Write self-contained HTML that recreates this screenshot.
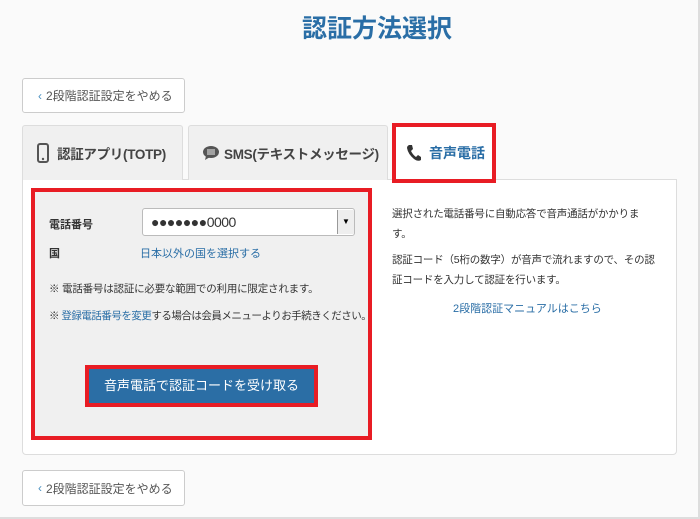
<!DOCTYPE html>
<html><head><meta charset="utf-8"><style>
*{box-sizing:border-box;margin:0;padding:0}
body{width:700px;height:519px;background:#fafafa;font-family:"Liberation Sans","Noto Sans CJK JP",sans-serif;position:relative;overflow:hidden;border-right:2px solid #ddd;border-bottom:2px solid #ddd}
.abs{position:absolute;white-space:nowrap}
h1{position:absolute;left:0;width:754px;top:9px;text-align:center;font-size:25px;color:#2a6ea6;font-weight:bold}
.back{position:absolute;left:22px;width:163px;height:35px;border:1px solid #ccc;border-radius:3px;background:#fff;font-size:12px;color:#555;display:flex;align-items:center;padding-left:15px;white-space:nowrap}
.back b{color:#4a90c0;font-weight:normal;margin-right:4px}
.tab{position:absolute;top:125px;height:55px;background:#f0f0f0;border:1px solid #ddd;border-bottom:none;border-radius:3px 3px 0 0;font-size:13.5px;font-weight:bold;color:#444;display:flex;align-items:center;white-space:nowrap;letter-spacing:-0.3px}
.panel{position:absolute;left:22px;top:179px;width:655px;height:276px;background:#fff;border:1px solid #ddd;border-radius:0 0 4px 4px}
.red{position:absolute;border:4px solid #e81c24}
.lnk{color:#2a6ea6}
.sm{font-size:10.5px;color:#333;letter-spacing:-0.2px}
</style></head><body>
<h1>認証方法選択</h1>
<div class="back" style="top:78px"><b>‹</b>2段階認証設定をやめる</div>
<div class="panel"></div>
<div class="tab" style="left:22px;width:161px;padding-left:14px">
<svg width="12" height="20" viewBox="0 0 12 20" style="margin-right:8px"><rect x="1" y="1" width="10" height="18" rx="2" fill="none" stroke="#555" stroke-width="2"/><circle cx="6" cy="16" r="1.2" fill="#555"/></svg>認証アプリ(TOTP)</div>
<div class="tab" style="left:188px;width:200px;padding-left:13px">
<svg width="18" height="16" viewBox="0 0 18 16" style="margin-right:4px"><ellipse cx="9" cy="7" rx="8" ry="6" fill="#555"/><path d="M4 11 L3 15 L8 12Z" fill="#555"/><path d="M5 5h8M5 7h8M5 9h8" stroke="#eee" stroke-width="1"/></svg>SMS(テキストメッセージ)</div>
<div class="abs" style="left:395px;top:126px;width:98px;height:54px;background:#fff"></div>
<div class="red" style="left:392px;top:123px;width:104px;height:60px"></div>
<div class="abs" style="left:406px;top:143px;font-size:14px;font-weight:bold;color:#2a6ea6;display:flex;align-items:center">
<svg width="16" height="18" viewBox="0 0 16 18" style="margin-right:7px"><path d="M3 1 L6 1 L7 5 L5 7 Q7 11 10 13 L12 11 L15 13 L15 16 Q12 18 8 15 Q2 10 1 4 Q1 2 3 1Z" fill="#333"/></svg>音声電話</div>
<div class="abs" style="left:35px;top:192px;width:333px;height:244px;background:#f0f0f0"></div>
<div class="red" style="left:31px;top:188px;width:341px;height:252px"></div>
<div class="abs" style="left:49px;top:216px;font-size:11px;font-weight:bold;color:#333">電話番号</div>
<div class="abs" style="left:142px;top:208px;width:213px;height:28px;background:#fff;border:1px solid #bbb;border-radius:3px;font-size:14px;color:#333;padding:5px 8px;letter-spacing:-0.5px">●●●●●●●0000</div>
<div class="abs" style="left:337px;top:210px;width:17px;height:24px;background:#eee;border-left:1px solid #999;font-size:8px;text-align:center;line-height:24px">▼</div>
<div class="abs" style="left:49px;top:245px;font-size:11px;font-weight:bold;color:#333">国</div>
<div class="abs lnk" style="left:140px;top:245px;font-size:11px">日本以外の国を選択する</div>
<div class="abs sm" style="left:49px;top:281px">※ 電話番号は認証に必要な範囲での利用に限定されます。</div>
<div class="abs sm" style="left:49px;top:308px;letter-spacing:-0.5px">※ <span class="lnk">登録電話番号を変更</span>する場合は会員メニューよりお手続きください。</div>
<div class="abs" style="left:89px;top:369px;width:225px;height:34px;background:#2b6ea5;color:#fff;font-size:13px;text-align:center;line-height:34px">音声電話で認証コードを受け取る</div>
<div class="red" style="left:85px;top:365px;width:233px;height:42px"></div>
<div class="abs sm" style="left:392px;top:204px;line-height:20px">選択された電話番号に自動応答で音声通話がかかりま<br>す。</div>
<div class="abs sm" style="left:392px;top:250px;line-height:20px">認証コード（5桁の数字）が音声で流れますので、その認<br>証コードを入力して認証を行います。</div>
<div class="abs lnk" style="left:453px;top:300px;font-size:11px">2段階認証マニュアルはこちら</div>
<div class="back" style="top:470px;height:36px"><b>‹</b>2段階認証設定をやめる</div>
</body></html>
